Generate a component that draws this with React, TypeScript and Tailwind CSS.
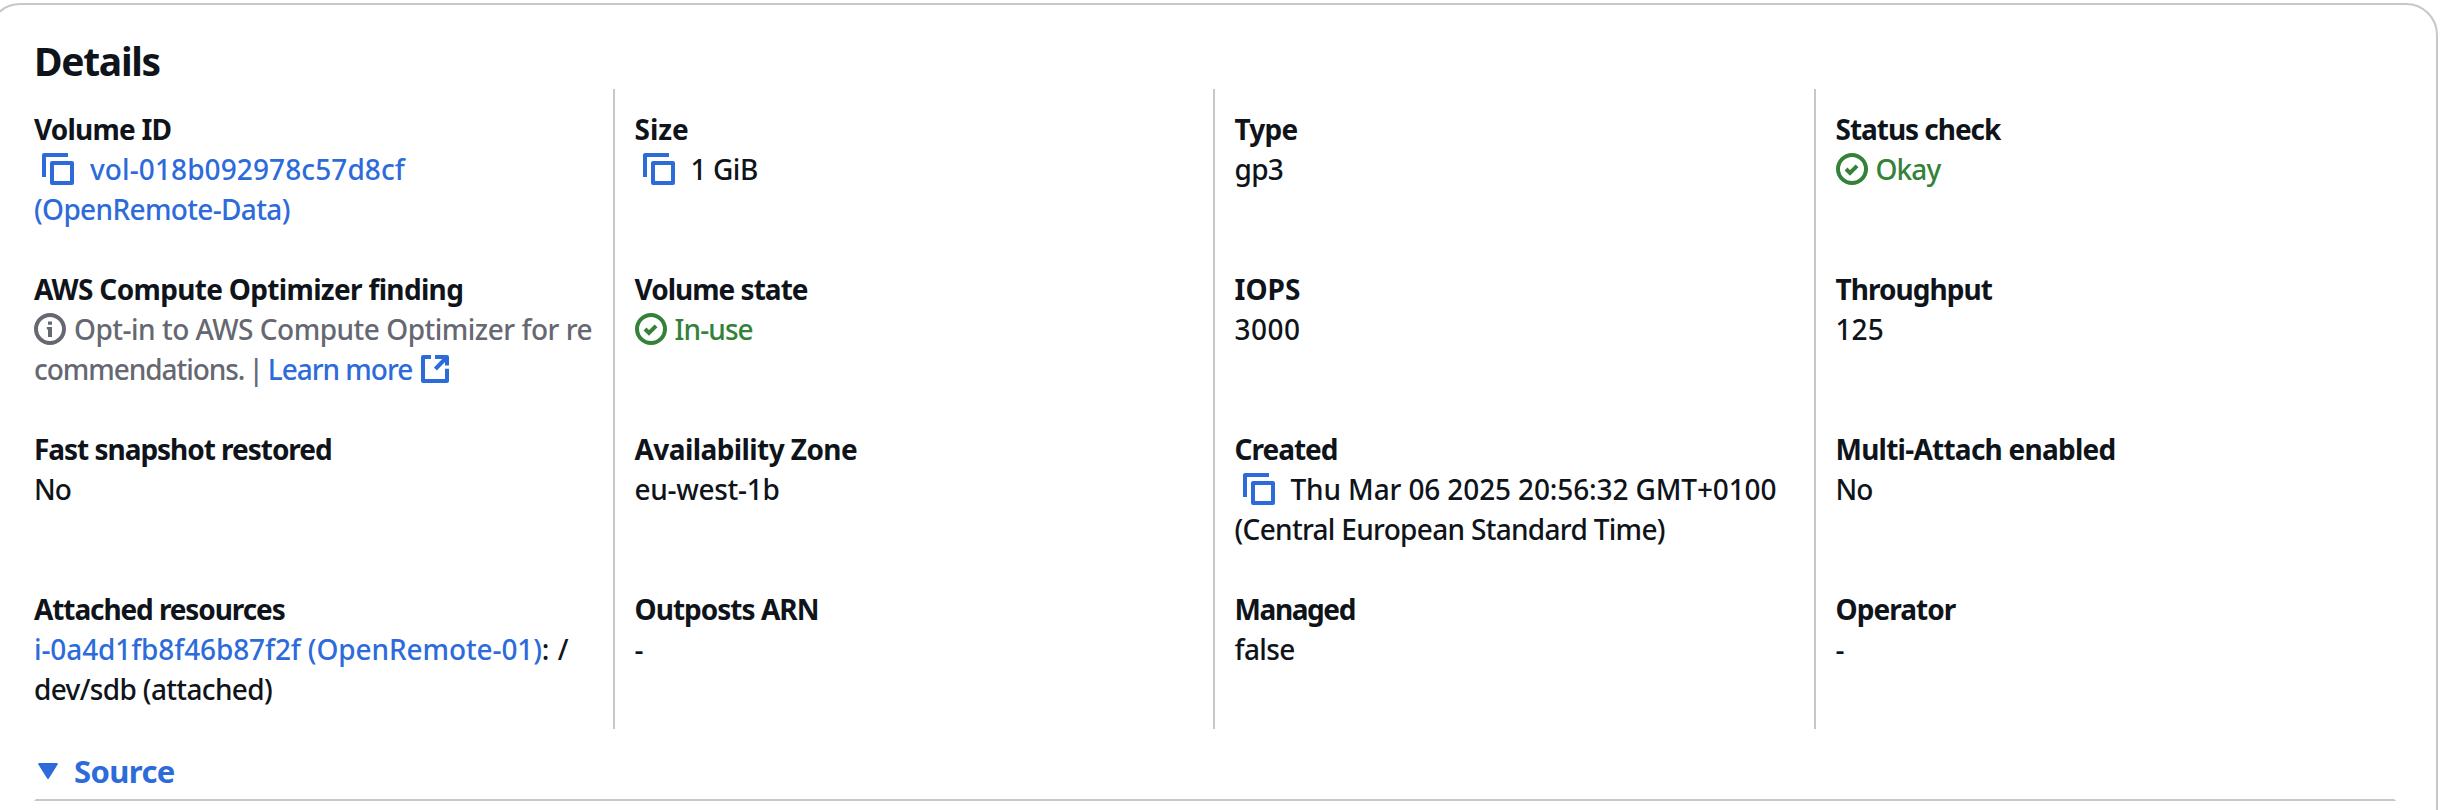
import type { ReactNode } from "react";

function CopyIcon() {
  return (
    <svg viewBox="0 0 16 16" className="ml-2 mr-4 inline-block size-8 align-[-5px] text-[#2d6bdb]" fill="none" stroke="currentColor" strokeWidth="2" strokeLinejoin="round">
      <path d="M15 5H5v10h10V5Z" />
      <path d="M13 1H1v11" />
    </svg>
  );
}

function SuccessIcon() {
  return (
    <svg viewBox="0 0 16 16" className="mr-[8px] inline-block size-8 align-[-5px]" fill="none" stroke="currentColor" strokeWidth="2">
      <circle cx="8" cy="8" r="7" />
      <path d="m5 8 2 2 3.521-3.521" />
    </svg>
  );
}

function InfoIcon() {
  return (
    <svg viewBox="0 0 16 16" className="mr-[8px] inline-block size-8 align-[-5px]" fill="none" stroke="currentColor" strokeWidth="2">
      <circle cx="8" cy="8" r="7" />
      <path d="M7 4.2h2v1.7H7zM6.4 7H9v5H7V8.3h-.6z" fill="currentColor" stroke="none" />
    </svg>
  );
}

function ExternalIcon() {
  return (
    <svg viewBox="0 0 16 16" className="ml-[7px] inline-block size-8 align-[-5px]" fill="none" stroke="currentColor" strokeWidth="2" strokeLinejoin="round">
      <path d="M14 7.9V14H2V2h4" />
      <path d="M8 2h6v4.2" />
      <path d="m14 2-5.8 6" />
    </svg>
  );
}

function Field({ label, track, children }: { label: string; track: string; children: ReactNode }) {
  return (
    <div className="h-[120px] whitespace-nowrap">
      <div className={`font-bold ${track}`}>{label}</div>
      {children}
    </div>
  );
}

function Column({ divided = true, children }: { divided?: boolean; children: ReactNode }) {
  return (
    <div className={`flex flex-col gap-10 py-5 ${divided ? "border-l-2 border-[#c6c6cd] pl-[19.5px]" : ""}`}>
      {children}
    </div>
  );
}

export default function App() {
  return (
    <div className="h-[810px] overflow-hidden bg-white font-['Noto_Sans',sans-serif] text-[28px] leading-10 font-medium text-[#0f141a]">
      <section className="mt-[3px] -ml-3 h-[900px] w-[2450px] rounded-[32px] border-2 border-[#c6c6cd] pt-8 pr-10 pl-11">
        <h2 className="text-[39px] leading-[48px] font-bold tracking-[-1.3px]">Details</h2>

        <div className="mt-1 grid grid-cols-[579px_600px_601px_582px]">
          <Column divided={false}>
            <Field label="Volume ID" track="tracking-[-0.8px]">
              <div className="text-[#2d6bdb]">
                <CopyIcon />
                <a className="tracking-[0.1px]">vol-018b092978c57d8cf</a>
              </div>
              <a className="block tracking-[-0.65px] text-[#2d6bdb]">(OpenRemote-Data)</a>
            </Field>
            <Field label="AWS Compute Optimizer finding" track="tracking-[-0.67px]">
              <div className="tracking-[-0.5px] text-[#656871]">
                <InfoIcon />
                Opt-in to AWS Compute Optimizer for re
              </div>
              <div className="text-[#656871]">
                <span className="tracking-[-1.05px]">commendations.</span>
                <span className="mr-[4px] ml-[4px]">|</span>
                <a className="tracking-[-1.03px] text-[#2d6bdb]">
                  Learn more
                  <ExternalIcon />
                </a>
              </div>
            </Field>
            <Field label="Fast snapshot restored" track="tracking-[-1.03px]">
              <div className="tracking-[-1px]">No</div>
            </Field>
            <Field label="Attached resources" track="tracking-[-1.1px]">
              <div>
                <a className="tracking-[-0.11px] text-[#2d6bdb]">i-0a4d1fb8f46b87f2f (OpenRemote-01)</a>
                <span className="tracking-[0.5px]">: /</span>
              </div>
              <div className="tracking-[-0.65px]">dev/sdb (attached)</div>
            </Field>
          </Column>

          <Column>
            <Field label="Size" track="tracking-[0px]">
              <div className="tracking-[-0.45px]">
                <CopyIcon />1 GiB
              </div>
            </Field>
            <Field label="Volume state" track="tracking-[-0.98px]">
              <div className="tracking-[-0.9px] text-[#348239]">
                <SuccessIcon />
                In-use
              </div>
            </Field>
            <Field label="Availability Zone" track="tracking-[-0.58px]">
              <div className="tracking-[-0.3px]">eu-west-1b</div>
            </Field>
            <Field label="Outposts ARN" track="tracking-[-0.98px]">
              <div>-</div>
            </Field>
          </Column>

          <Column>
            <Field label="Type" track="tracking-[-0.75px]">
              <div className="tracking-[-0.7px]">gp3</div>
            </Field>
            <Field label="IOPS" track="tracking-[0px]">
              <div className="tracking-[0.45px]">3000</div>
            </Field>
            <Field label="Created" track="tracking-[-1px]">
              <div className="tracking-[-0.13px]">
                <CopyIcon />
                Thu Mar 06 2025 20:56:32 GMT+0100
              </div>
              <div className="tracking-[-0.69px]">(Central European Standard Time)</div>
            </Field>
            <Field label="Managed" track="tracking-[-1.4px]">
              <div className="tracking-[-0.6px]">false</div>
            </Field>
          </Column>

          <Column>
            <Field label="Status check" track="tracking-[-1.03px]">
              <div className="tracking-[-0.9px] text-[#348239]">
                <SuccessIcon />
                Okay
              </div>
            </Field>
            <Field label="Throughput" track="tracking-[-0.95px]">
              <div className="tracking-[0.1px]">125</div>
            </Field>
            <Field label="Multi-Attach enabled" track="tracking-[-0.75px]">
              <div className="tracking-[-1px]">No</div>
            </Field>
            <Field label="Operator" track="tracking-[-0.95px]">
              <div>-</div>
            </Field>
          </Column>
        </div>

        <button className="mt-[22px] flex w-[2362px] items-start border-x-2 border-b-2 border-x-transparent border-b-[#c6c6cd] pb-2 text-[31px] font-bold tracking-[-0.6px] text-[#2d6bdb]">
          <svg viewBox="0 0 20 16" className="mt-3 mr-4 ml-[2px] h-4 w-5" fill="currentColor" stroke="currentColor" strokeWidth="2" strokeLinejoin="round">
            <path d="M1.2 1h17.6L10 15z" />
          </svg>
          Source
        </button>
      </section>
    </div>
  );
}
